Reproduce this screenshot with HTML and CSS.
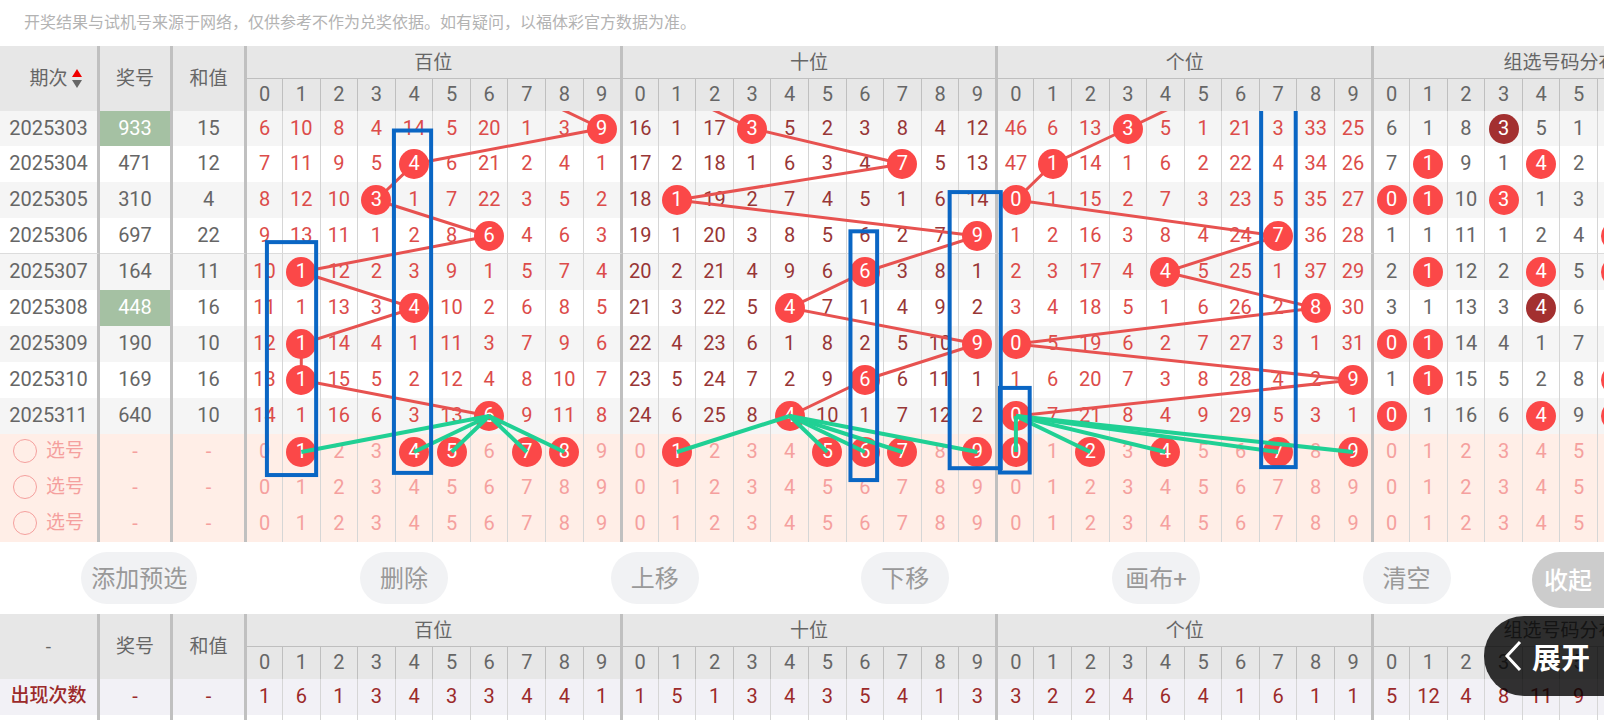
FILE: index.html
```
<!DOCTYPE html>
<html lang="zh-CN">
  <head>
    <meta charset="UTF-8" />
    <meta name="viewport" content="width=device-width, initial-scale=1.0" />
    <title>走势图</title>
    <link rel="stylesheet" href="styles.css">
    <script src="chart.js" defer></script>
  </head>
  <body>
    <p class="notice">开奖结果与试机号来源于网络，仅供参考不作为兑奖依据。如有疑问，以福体彩官方数据为准。</p>

    <!-- 走势图 -->
    <div class="chart" id="chart">
      <table>
        <colgroup></colgroup>
        <thead>
          <tr class="titles">
            <th rowspan="2" class="thick">
              <button type="button" class="sort">期次
                <svg width="10" height="20" viewBox="0 0 10 20"><path d="M5 0l5 8H0z" fill="#f00000"/><path d="M0 11h10l-5 8z" fill="#666"/></svg>
              </button>
            </th>
            <th rowspan="2" class="thick">奖号</th>
            <th rowspan="2" class="thick">和值</th>
            <th colspan="10" class="title thick">百位</th>
            <th colspan="10" class="title thick">十位</th>
            <th colspan="10" class="title thick">个位</th>
            <th colspan="10" class="title thick">组选号码分布</th>
          </tr>
          <tr class="digits"></tr>
        </thead>
        <tbody id="rows"></tbody>
      </table>
      <svg class="layer trend" id="trend"></svg>
      <svg class="layer marks" id="marks"></svg>
    </div>

    <!-- 操作按钮 -->
    <div class="toolbar">
      <div class="actions">
        <button type="button">添加预选</button>
        <button type="button">删除</button>
        <button type="button">上移</button>
        <button type="button">下移</button>
        <button type="button">画布+</button>
        <button type="button">清空</button>
      </div>
      <button type="button" class="fold">收起</button>
    </div>

    <!-- 统计 -->
    <div class="stats">
      <div class="chart">
        <table>
          <colgroup></colgroup>
          <thead>
            <tr class="titles">
              <th rowspan="2" class="thick">-</th>
              <th rowspan="2" class="thick">奖号</th>
              <th rowspan="2" class="thick">和值</th>
              <th colspan="10" class="title thick">百位</th>
              <th colspan="10" class="title thick">十位</th>
              <th colspan="10" class="title thick">个位</th>
              <th colspan="10" class="title thick">组选号码分布</th>
            </tr>
            <tr class="digits"></tr>
          </thead>
          <tbody id="statRows"></tbody>
        </table>
      </div>
      <button type="button" class="expand">
        <svg width="18" height="32" viewBox="0 0 18 32"><path d="M16 2L3 16l13 14" fill="none" stroke="#fff" stroke-width="3"/></svg>展开
      </button>
    </div>
  </body>
</html>
```
FILE: styles.css
```
* {
  box-sizing: border-box;
  margin: 0;
  padding: 0;
}
body {
  height: 100vh;
  overflow: hidden;
  background: #fff;
  color: #666;
  font-family: Roboto, "Noto Sans CJK SC", sans-serif;
  font-size: 20px;
}
button {
  border: 0;
  background: none;
  color: inherit;
  font: inherit;
  cursor: pointer;
}
.notice {
  height: 46px;
  padding-left: 24px;
  color: #b3b3b3;
  font-size: 16px;
  line-height: 46px;
  white-space: nowrap;
}

/* 表格比窗口宽，右侧超出部分隐藏 */
.chart {
  position: relative;
  width: 109.1%;
}
table {
  width: 100%;
  table-layout: fixed;
  border-collapse: separate;
  border-spacing: 0;
}
.col-issue {
  width: 100px;
}
.col-code {
  width: 73px;
}
.col-sum {
  width: 74px;
}
.col-first {
  width: 36px;
}
.col-last {
  width: 39px;
}
th,
td {
  border-right: 1px solid #d6d6d6;
  font-weight: 400;
  line-height: 24px;
  text-align: center;
  white-space: nowrap;
}
td {
  padding-bottom: 2px;
}
th {
  background: #e7e7e7;
  border-color: #bfbfbf;
  font-size: 19px;
}
th.title {
  padding-top: 2px;
  border-bottom: 1px solid #bfbfbf;
}
.digits th {
  padding-bottom: 2px;
  font-size: 20px;
}
th.thick,
td.thick {
  border-right: 3px solid #c0c0c0;
}
.titles {
  height: 33px;
}
.digits {
  height: 32px;
}
tbody tr {
  height: 36px;
}
#rows tr:first-child {
  height: 35px;
}
tbody tr:nth-child(odd) {
  background: #f5f5f5;
}
tr.five td {
  border-bottom: 1px solid #dcdcdc;
}

.sort {
  display: inline-flex;
  align-items: center;
  gap: 4px;
  padding-left: 14px;
}
.repeat {
  background: #a5c1a3;
  color: #fff;
}
.red {
  color: #dc4c4a;
}
.dark {
  color: #983636;
}
td.hit {
  padding: 0;
}
.ball {
  position: relative;
  z-index: 2;
  display: block;
  width: 30px;
  height: 30px;
  margin: 0 auto;
  border-radius: 50%;
  background: #fb4848;
  color: #fff;
  line-height: 28px;
}
.ball.double {
  background: #a33030;
}

/* 预选行 */
#rows tr.pick {
  background: #ffeee7;
  color: #f5a09e;
}
.pick label {
  display: flex;
  align-items: center;
  gap: 9px;
  padding-left: 13px;
  font-size: 19px;
}
.pick input {
  width: 24px;
  height: 24px;
  appearance: none;
  border: 1px solid #f5a09e;
  border-radius: 50%;
}

/* 连线和标记 */
.layer {
  position: absolute;
  top: 65px;
  left: 0;
  width: 100%;
  height: calc(100% - 65px);
  pointer-events: none;
}
.trend {
  z-index: 1;
}
.marks {
  z-index: 3;
}
.trend polyline {
  fill: none;
  stroke: #e75250;
  stroke-width: 3;
}
.marks line {
  stroke: #20d094;
  stroke-width: 4;
}
.marks rect {
  fill: none;
  stroke: #0a66c4;
  stroke-width: 4;
}

.toolbar {
  display: flex;
  padding: 10px 0 6px;
  font-size: 24px;
}
.actions {
  display: flex;
  flex: 1;
  align-items: flex-start;
  justify-content: space-around;
}
.actions button {
  height: 52px;
  min-width: 88px;
  padding: 0 10px 4px;
  border-radius: 26px;
  background: #f1f2f4;
  color: #999;
}
.fold {
  width: 72px;
  height: 56px;
  padding-bottom: 4px;
  border-radius: 28px 0 0 28px;
  background: #ccc;
  color: #fff;
  font-weight: 500;
}

.stats {
  position: relative;
}
#statRows tr:first-child {
  background: #f2f1f6;
  color: #9c2a2a;
}
#statRows .name {
  font-size: 19px;
  font-weight: 500;
}
.expand {
  position: absolute;
  top: 2px;
  right: 0;
  z-index: 4;
  display: flex;
  align-items: center;
  gap: 10px;
  width: 120px;
  height: 80px;
  padding-left: 20px;
  border-radius: 40px 0 0 40px;
  background: rgba(0, 0, 0, 0.8);
  color: #fff;
  font-size: 29px;
  font-weight: 700;
  white-space: nowrap;
}
```
FILE: chart.js
```
// 开奖号码
var firstIssue = 2025303;
var draws = ["933", "471", "310", "697", "164", "448", "190", "169", "640"];

// 第一期的遗漏值：百位 十位 个位 组选
var miss = [
  [6, 10, 8, 4, 14, 5, 20, 1, 3, 0],
  [16, 1, 17, 0, 5, 2, 3, 8, 4, 12],
  [46, 6, 13, 0, 5, 1, 21, 3, 33, 25],
  [6, 1, 8, 0, 5, 1, 3, 2, 4, 0]
];
var colors = ["red", "dark", "red", ""];

// 上一期的号码，连线从表格上方进来
var before = [7, 1, 5];

// 预选号码
var picks = [[1, 4, 5, 7, 8], [1, 5, 6, 7, 9], [0, 2, 4, 7, 9], []];

// 出现次数
var counts = [
  [1, 6, 1, 3, 4, 3, 3, 4, 4, 1],
  [1, 5, 1, 3, 4, 3, 5, 4, 1, 3],
  [3, 2, 2, 4, 6, 4, 1, 6, 1, 1],
  [5, 12, 4, 8, 11, 9, 8, 9, 6, 5]
];

// 画布上的方框，单位是列和行：左 上 右 下
var boxes = [
  [0.53, 3.67, 1.84, 10.14],
  [3.91, 0.57, 4.9, 10.08],
  [16.06, 3.37, 16.77, 10.28],
  [18.7, 2.28, 20.06, 9.95],
  [20.04, 7.72, 20.83, 10.07],
  [26.99, -1, 27.91, 9.92]
];

function cell(text, cls) {
  return '<td class="' + cls + '">' + text + "</td>";
}

function ball(n, cls) {
  return '<span class="ball ' + cls + '">' + n + "</span>";
}

function edge(n) {
  return n == 9 ? " thick" : "";
}

// 列宽，每组最后一列带粗线要宽一点
document.querySelectorAll("colgroup").forEach(function (group) {
  var html = '<col class="col-issue"><col class="col-code"><col class="col-sum">';
  for (var g = 0; g < 4; g++) {
    html += '<col class="col-first"><col span="8"><col class="col-last">';
  }
  group.innerHTML = html;
});

// 表头的 0-9
document.querySelectorAll(".digits").forEach(function (tr) {
  var html = "";
  for (var i = 0; i < 40; i++) {
    html += '<th class="' + edge(i % 10) + '">' + (i % 10) + "</th>";
  }
  tr.innerHTML = html;
});

var html = "";
draws.forEach(function (code, r) {
  var nums = code.split("").map(Number);
  var repeat = new Set(nums).size < 3;
  html += "<tr" + (r == 3 ? ' class="five"' : "") + ">";
  html += cell(firstIssue + r, "thick");
  html += cell(code, "thick" + (repeat ? " repeat" : ""));
  html += cell(nums[0] + nums[1] + nums[2], "thick");
  for (var g = 0; g < 4; g++) {
    for (var n = 0; n < 10; n++) {
      var times = nums.filter(function (v) { return v == n; }).length;
      var hit = g < 3 ? nums[g] == n : times > 0;
      if (hit) {
        miss[g][n] = 0;
        html += cell(ball(n, g == 3 && times > 1 ? "double" : ""), "hit" + edge(n));
      } else {
        if (r > 0) miss[g][n]++;
        html += cell(miss[g][n], colors[g] + edge(n));
      }
    }
  }
  html += "</tr>";
});

// 三行预选
for (var p = 0; p < 3; p++) {
  html += '<tr class="pick">';
  html += cell('<label><input type="radio" name="pick">选号</label>', "thick");
  html += cell("-", "thick") + cell("-", "thick");
  for (var g = 0; g < 4; g++) {
    for (var n = 0; n < 10; n++) {
      var on = p == 0 && picks[g].indexOf(n) > -1;
      html += cell(on ? ball(n, "") : n, (on ? "hit" : "") + edge(n));
    }
  }
  html += "</tr>";
}
var rows = document.getElementById("rows");
rows.innerHTML = html;

// 统计行
html = "<tr>" + cell("出现次数", "name thick") + cell("-", "thick") + cell("-", "thick");
counts.forEach(function (list) {
  list.forEach(function (v, n) {
    html += cell(v, edge(n));
  });
});
html += "</tr><tr>";
for (var i = 0; i < 43; i++) {
  html += cell("", i < 3 ? "thick" : edge((i - 3) % 10));
}
document.getElementById("statRows").innerHTML = html + "</tr>";

// 格子中心点
function center(r, g, n) {
  var base = document.getElementById("trend").getBoundingClientRect();
  var td = rows.rows[Math.max(r, 0)].cells[3 + g * 10 + n];
  var box = td.getBoundingClientRect();
  var x = box.left - base.left + (box.width - (n == 9 ? 3 : 1)) / 2;
  var y = box.top - base.top + box.height / 2;
  return [x, r < 0 ? y - 36 : y];
}

function drawLines() {
  var trend = "";
  var marks = "";
  var last = draws.length - 1;
  for (var g = 0; g < 3; g++) {
    var points = [center(-1, g, before[g])];
    draws.forEach(function (code, r) {
      points.push(center(r, g, Number(code[g])));
    });
    trend += '<polyline points="' + points.join(" ") + '"/>';

    var from = center(last, g, Number(draws[last][g]));
    picks[g].forEach(function (n) {
      var to = center(last + 1, g, n);
      marks += '<line x1="' + from[0] + '" y1="' + from[1] + '" x2="' + to[0] + '" y2="' + to[1] + '"/>';
    });
  }

  var left = 247;
  var step = (document.getElementById("chart").offsetWidth - left) / 40;
  boxes.forEach(function (b) {
    marks += '<rect x="' + (left + b[0] * step) + '" y="' + (b[1] * 36 - 1) +
      '" width="' + (b[2] - b[0]) * step + '" height="' + (b[3] - b[1]) * 36 + '"/>';
  });

  document.getElementById("trend").innerHTML = trend;
  document.getElementById("marks").innerHTML = marks;
}

drawLines();
window.addEventListener("resize", drawLines);
```
